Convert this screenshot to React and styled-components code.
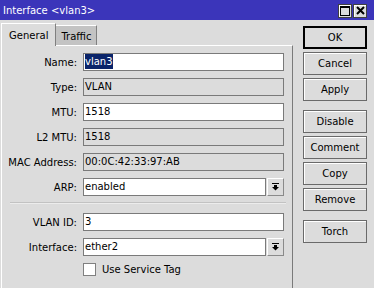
import React from "react";
import styled, { createGlobalStyle } from "styled-components";

const GlobalStyle = createGlobalStyle`
  html, body { margin: 0; padding: 0; background: #dcdcdc; }
  body { font-family: "DejaVu Sans", "Liberation Sans", sans-serif; font-size: 10px; color: #000; }
  * { box-sizing: border-box; }
`;

const Window = styled.div`
  width: 374px;
  height: 288px;
  overflow: hidden;
  background: #dcdcdc;
  display: flex;
  flex-direction: column;
`;

const TitleBar = styled.div`
  height: 20px;
  flex: none;
  background: #3b35ba;
  color: #fff;
  display: flex;
  align-items: center;
  justify-content: space-between;
  padding: 0 7px 0 3px;
  font-size: 10px;
`;

const TitleButtons = styled.div`
  display: flex;
  gap: 1px;
  margin-top: 1px;
`;

const TitleBtn = styled.div`
  width: 14px;
  height: 14px;
  background: #dcdcdc;
  border: 1px solid #404040;
  box-shadow: inset 1px 1px 0 #fff;
  display: flex;
  align-items: center;
  justify-content: center;
`;

const Body = styled.div`
  flex: 1;
  display: flex;
`;

const LeftPane = styled.div`
  width: 293px;
  flex: none;
  display: flex;
  flex-direction: column;
  padding: 3px 0 0 1px;
`;

const Tabs = styled.div`
  height: 22px;
  display: flex;
  align-items: flex-end;
  position: relative;
  z-index: 1;
`;

const Tab = styled.div`
  height: ${(p) => (p.$active ? "23px" : "20px")};
  margin-bottom: ${(p) => (p.$active ? "-1px" : "0")};
  padding: ${(p) => (p.$active ? "0 7px" : "0 5px")};
  background: ${(p) => (p.$active ? "#dcdcdc" : "#c3c3c3")};
  border-top: 1px solid #fff;
  border-left: ${(p) => (p.$active ? "1px solid #fff" : "none")};
  border-right: 1px solid #808080;
  display: flex;
  align-items: center;
  padding-top: ${(p) => (p.$active ? "0" : "1px")};
`;

const Panel = styled.div`
  flex: 1;
  border-top: 1px solid #fff;
  border-left: 1px solid #fff;
  border-right: 1px solid #7a7a7a;
  padding-top: 7px;
  display: flex;
  flex-direction: column;
  gap: 7px;
`;

const Row = styled.div`
  display: grid;
  grid-template-columns: 75px 201px;
  column-gap: 6px;
  align-items: center;
  height: 18px;
`;

const Label = styled.div`
  text-align: right;
  white-space: nowrap;
`;

const Field = styled.div`
  height: 18px;
  border: 1px solid #7a7a7a;
  background: ${(p) => (p.$ro ? "#dcdcdc" : "#fff")};
  padding-left: 1px;
  line-height: 16px;
  white-space: nowrap;
  overflow: hidden;
  flex: 1;
`;

const Selected = styled.span`
  display: inline-block;
  background: #0a246a;
  color: #fff;
  line-height: 15px;
  vertical-align: top;
`;

const SelectWrap = styled.div`
  display: flex;
  gap: 1px;
`;

const DropBtn = styled.div`
  width: 17px;
  height: 18px;
  flex: none;
  background: #dcdcdc;
  border: 1px solid;
  border-color: #fff #8a8a8a #8a8a8a #fff;
  display: flex;
  align-items: center;
  justify-content: center;
`;

const Divider = styled.div`
  height: 2px;
  margin: -1px 0 2px 8px;
  width: 276px;
  border-top: 1px solid #c2c2c2;
  border-bottom: 1px solid #ececec;
`;

const CheckRow = styled.div`
  display: flex;
  align-items: center;
  gap: 6px;
  margin-left: 81px;
  height: 13px;
`;

const CheckBox = styled.div`
  width: 13px;
  height: 13px;
  background: #fff;
  border: 1px solid #808080;
`;

const RightPane = styled.div`
  display: flex;
  flex-direction: column;
  padding: 6px 0 0 10px;
  gap: 3px;
`;

const Button = styled.div`
  width: 64px;
  height: 23px;
  display: flex;
  align-items: center;
  justify-content: center;
  background: #dcdcdc;
  border: 1px solid ${(p) => (p.$default ? "#000" : "#6a6a6a")};
  box-shadow: ${(p) => (p.$default ? "inset 0 0 0 1px #000" : "inset 1px 1px 0 #fff")};
  margin-top: ${(p) => (p.$gap ? "6px" : "0")};
`;

const DropIcon = () => (
  <svg width="7" height="8" viewBox="0 0 7 8">
    <rect x="0" y="0" width="7" height="1" fill="#000" />
    <rect x="2" y="2" width="3" height="2" fill="#000" />
    <polygon points="0,4 7,4 3.5,7.5" fill="#000" />
  </svg>
);

const fields = [
  { label: "Name:", value: "vlan3", sel: true },
  { label: "Type:", value: "VLAN", ro: true },
  { label: "MTU:", value: "1518" },
  { label: "L2 MTU:", value: "1518", ro: true },
  { label: "MAC Address:", value: "00:0C:42:33:97:AB", ro: true },
  { label: "ARP:", value: "enabled", select: true },
];

const fields2 = [
  { label: "VLAN ID:", value: "3" },
  { label: "Interface:", value: "ether2", select: true },
];

function FormRow({ f }) {
  return (
    <Row>
      <Label>{f.label}</Label>
      {f.select ? (
        <SelectWrap>
          <Field>{f.value}</Field>
          <DropBtn>
            <DropIcon />
          </DropBtn>
        </SelectWrap>
      ) : (
        <Field $ro={f.ro}>{f.sel ? <Selected>{f.value}</Selected> : f.value}</Field>
      )}
    </Row>
  );
}

const buttons = [
  { t: "OK", d: true },
  { t: "Cancel" },
  { t: "Apply" },
  { t: "Disable", g: true },
  { t: "Comment" },
  { t: "Copy" },
  { t: "Remove" },
  { t: "Torch", g: true },
];

export default function App() {
  return (
    <>
      <GlobalStyle />
      <Window>
        <TitleBar>
          <span>Interface &lt;vlan3&gt;</span>
          <TitleButtons>
            <TitleBtn>
              <svg width="10" height="10" viewBox="0 0 10 10">
                <rect x="0.5" y="0.5" width="9" height="9" fill="none" stroke="#000" />
                <rect x="0" y="0" width="10" height="2" fill="#000" />
              </svg>
            </TitleBtn>
            <TitleBtn>
              <svg width="9" height="9" viewBox="0 0 9 9">
                <path d="M1 1 L8 8 M8 1 L1 8" stroke="#000" strokeWidth="2" />
              </svg>
            </TitleBtn>
          </TitleButtons>
        </TitleBar>
        <Body>
          <LeftPane>
            <Tabs>
              <Tab $active>General</Tab>
              <Tab>Traffic</Tab>
            </Tabs>
            <Panel>
              {fields.map((f) => (
                <FormRow key={f.label} f={f} />
              ))}
              <Divider />
              {fields2.map((f) => (
                <FormRow key={f.label} f={f} />
              ))}
              <CheckRow>
                <CheckBox />
                <span>Use Service Tag</span>
              </CheckRow>
            </Panel>
          </LeftPane>
          <RightPane>
            {buttons.map((b) => (
              <Button key={b.t} $default={b.d} $gap={b.g}>
                {b.t}
              </Button>
            ))}
          </RightPane>
        </Body>
      </Window>
    </>
  );
}
